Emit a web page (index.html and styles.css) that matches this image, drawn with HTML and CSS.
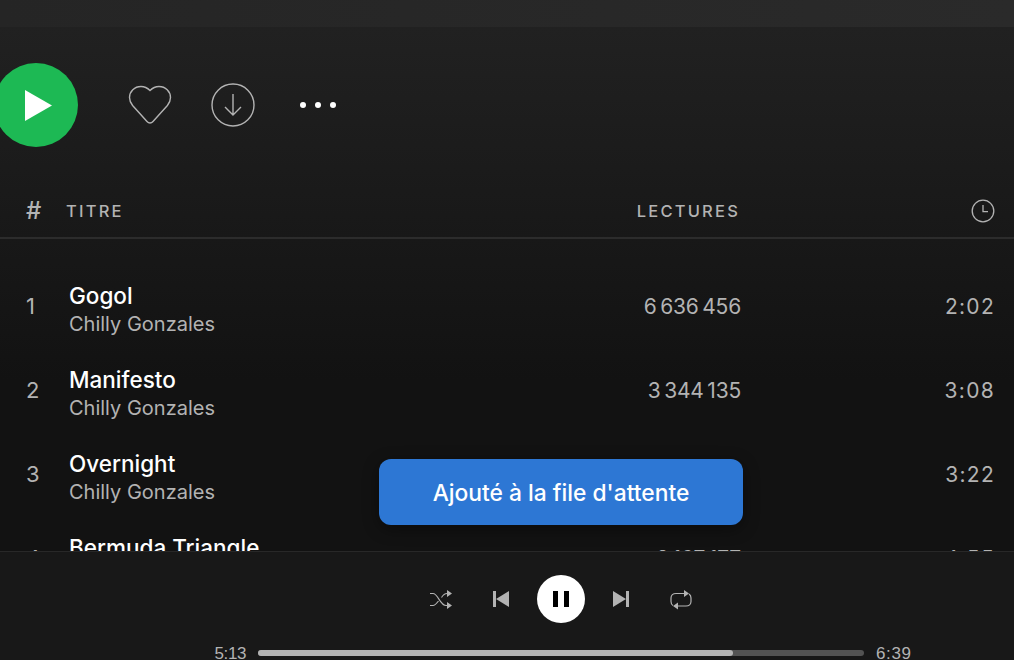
FILE: index.html
```html
<!DOCTYPE html>
<html lang="fr">
<head>
    <meta charset="UTF-8">
    <title>Chilly Gonzales</title>
    <link rel="stylesheet" href="styles.css">
</head>
<body>
    <div class="main">
        <div class="top-strip"></div>
        <div class="actions">
            <button class="play-btn">
                <svg width="27" height="31" viewBox="0 0 27 31"><path d="M0 0L27 15.5L0 31Z" fill="#fff"/></svg>
            </button>
            <svg class="heart" width="44" height="40" viewBox="0 0 44 40" fill="none" stroke="#b3b3b3" stroke-width="1.4">
                <path d="M22 5.5C19.5 3 16.5 1.5 13 1.5C6.5 1.5 1.5 6.5 1.5 12.5C1.5 15.5 2.6 18 4.6 20.5L19 36.5C20.7 38.5 23.3 38.5 25 36.5L39.4 20.5C41.4 18 42.5 15.5 42.5 12.5C42.5 6.5 37.5 1.5 31 1.5C27.5 1.5 24.5 3 22 5.5Z"/>
            </svg>
            <svg class="download" width="44" height="44" viewBox="0 0 44 44" fill="none" stroke="#b3b3b3" stroke-width="1.4">
                <circle cx="22" cy="22" r="21"/>
                <path d="M22 11V32M14 24L22 32L30 24"/>
            </svg>
            <div class="dots"><span></span><span></span><span></span></div>
        </div>
        <div class="track-head">
            <span class="head-num">#</span>
            <span class="head-title">TITRE</span>
            <span class="head-plays">LECTURES</span>
            <svg class="clock" width="24" height="24" viewBox="0 0 24 24" fill="none" stroke="#b3b3b3" stroke-width="1.3">
                <circle cx="12" cy="12" r="10.8"/>
                <path d="M12 6V12.6H17"/>
            </svg>
        </div>
        <div class="track-list">
            <div class="track">
                <span class="track-num">1</span>
                <div class="track-text"><div class="track-title">Gogol</div><div class="track-artist">Chilly Gonzales</div></div>
                <span class="track-plays">6&#8201;636&#8201;456</span>
                <span class="track-time">2:02</span>
            </div>
            <div class="track">
                <span class="track-num">2</span>
                <div class="track-text"><div class="track-title">Manifesto</div><div class="track-artist">Chilly Gonzales</div></div>
                <span class="track-plays">3&#8201;344&#8201;135</span>
                <span class="track-time">3:08</span>
            </div>
            <div class="track">
                <span class="track-num">3</span>
                <div class="track-text"><div class="track-title">Overnight</div><div class="track-artist">Chilly Gonzales</div></div>
                <span class="track-plays"></span>
                <span class="track-time">3:22</span>
            </div>
            <div class="track">
                <span class="track-num">4</span>
                <div class="track-text"><div class="track-title">Bermuda Triangle</div><div class="track-artist">Chilly Gonzales</div></div>
                <span class="track-plays">2&#8201;167&#8201;177</span>
                <span class="track-time">4:55</span>
            </div>
        </div>
    </div>

    <div class="toast">Ajouté à la file d'attente</div>

    <div class="player">
        <div class="controls">
            <svg width="24" height="24" viewBox="0 0 24 24" fill="none" stroke="#b3b3b3" stroke-width="1.1">
                <path d="M1 6.5H4C9 6.5 11 18.5 17 18.5H19M1 18.5H4C6 18.5 8 16 9.5 14M12.5 10.5C14 8 15.5 6.5 18 6.5H19"/>
                <path d="M18 3L23 6.5L18 10ZM18 15L23 18.5L18 22Z" fill="#b3b3b3" stroke="none"/>
            </svg>
            <svg width="24" height="24" viewBox="0 0 24 24" fill="#b3b3b3"><path d="M4 4H7V20H4ZM7 12L20 4V20Z"/></svg>
            <button class="pause-btn"><span></span><span></span></button>
            <svg width="24" height="24" viewBox="0 0 24 24" fill="#b3b3b3"><path d="M20 4H17V20H20ZM17 12L4 4V20Z"/></svg>
            <svg width="24" height="24" viewBox="0 0 24 24" fill="none" stroke="#b3b3b3" stroke-width="1.2">
                <path d="M4 18.5C2.7 17.8 2 16.3 2 14.5V11C2 8.5 4 6.5 7 6.5H16"/>
                <path d="M20 7C21.3 7.8 22 9.3 22 11V14.5C22 17 20 19 17 19H8"/>
                <path d="M15 3L20 6.5L15 10ZM9 15.5L4 19L9 22.5Z" fill="#b3b3b3" stroke="none"/>
            </svg>
        </div>
        <div class="progress-row">
            <span class="time time-now">5:13</span>
            <div class="progress"><div class="progress-fill"></div></div>
            <span class="time time-total">6:39</span>
        </div>
    </div>
</body>
</html>
```

FILE: styles.css
```css
html, body {
    height: 100%;
}
body {
    margin: 0;
    overflow: hidden;
    background-color: #121212;
    color: #fff;
    font-family: "Inter", "Noto Sans", sans-serif;
}
button {
    border: none;
    padding: 0;
}
.main {
    height: 551px;
    overflow: hidden;
    background: linear-gradient(#212121 27px, #121212 380px);
}
.top-strip {
    height: 27px;
    background: linear-gradient(to right, #252525, #2a2a2a);
}
.actions {
    display: flex;
    align-items: center;
    height: 84px;
    margin-top: 36px;
    margin-left: -6px;
}
.play-btn {
    display: flex;
    align-items: center;
    justify-content: center;
    width: 84px;
    height: 84px;
    border-radius: 50%;
    background-color: #1db954;
}
.play-btn svg {
    margin-left: 5px;
}
.heart {
    margin-left: 50px;
}
.download {
    margin-left: 39px;
}
.dots {
    display: flex;
    gap: 9px;
    margin-left: 45px;
}
.dots span {
    width: 6px;
    height: 6px;
    border-radius: 50%;
    background-color: #fff;
}
.track-head, .track {
    display: grid;
    align-items: center;
}
.track-head {
    grid-template-columns: 41px 1fr 120px 253px;
    height: 55px;
    margin-top: 37px;
    padding: 0 19px 0 26px;
    border-bottom: 2px solid #2c2c2c;
    box-sizing: border-box;
    color: #b3b3b3;
    font-size: 16.5px;
    font-weight: 500;
    letter-spacing: 2.2px;
}
.head-num {
    font-size: 24px;
    letter-spacing: 0;
}
.head-title {
    margin-left: -1px;
}
.head-plays {
    margin-right: 2px;
    text-align: right;
}
.clock {
    justify-self: end;
}
.track-list {
    padding: 25px 20px 0 26px;
}
.track {
    grid-template-columns: 43px 1fr 120px 253px;
    height: 84px;
}
.track-num {
    color: #b3b3b3;
    font-size: 22px;
}
.track-text {
    padding-top: 7px;
}
.track-title {
    font-size: 22.5px;
    font-weight: 500;
    line-height: 29px;
}
.track-artist {
    color: #b3b3b3;
    font-size: 20px;
    line-height: 29px;
}
.track-plays, .track-time {
    color: #b3b3b3;
    font-size: 21px;
    text-align: right;
}
.track-plays {
    letter-spacing: -0.2px;
}
.track-time {
    letter-spacing: 1.3px;
    margin-right: -1px;
}
.toast {
    position: absolute;
    left: 379px;
    top: 459px;
    width: 364px;
    height: 66px;
    display: flex;
    align-items: center;
    justify-content: center;
    border-radius: 12px;
    background-color: #2d77d4;
    box-shadow: 0 4px 16px rgba(0,0,0,0.4);
    font-size: 22.8px;
    font-weight: 500;
}
.player {
    height: 109px;
    box-sizing: border-box;
    overflow: hidden;
    border-top: 1px solid #282828;
    background-color: #181818;
    padding-left: 108px;
    padding-top: 23px;
}
.controls {
    display: flex;
    align-items: center;
    justify-content: center;
    gap: 36px;
    height: 48px;
}
.pause-btn {
    display: flex;
    align-items: center;
    justify-content: center;
    gap: 6px;
    width: 48px;
    height: 48px;
    margin: 0 -12px;
    border-radius: 50%;
    background-color: #fff;
}
.pause-btn span {
    width: 5px;
    height: 16px;
    background-color: #000;
}
.progress-row {
    display: flex;
    align-items: flex-start;
    justify-content: center;
    gap: 12px;
    margin-top: 27px;
}
.time {
    width: 40px;
    margin-top: -5px;
    color: #b3b3b3;
    font-family: "Liberation Sans", sans-serif;
    font-size: 17px;
    line-height: 18px;
}
.time-now {
    letter-spacing: -0.4px;
    text-align: right;
}
.time-total {
    letter-spacing: 0.6px;
}
.progress {
    width: 606px;
    height: 6px;
    border-radius: 3px;
    background-color: #535353;
}
.progress-fill {
    width: 475px;
    height: 6px;
    border-radius: 3px;
    background-color: #b3b3b3;
}
```
